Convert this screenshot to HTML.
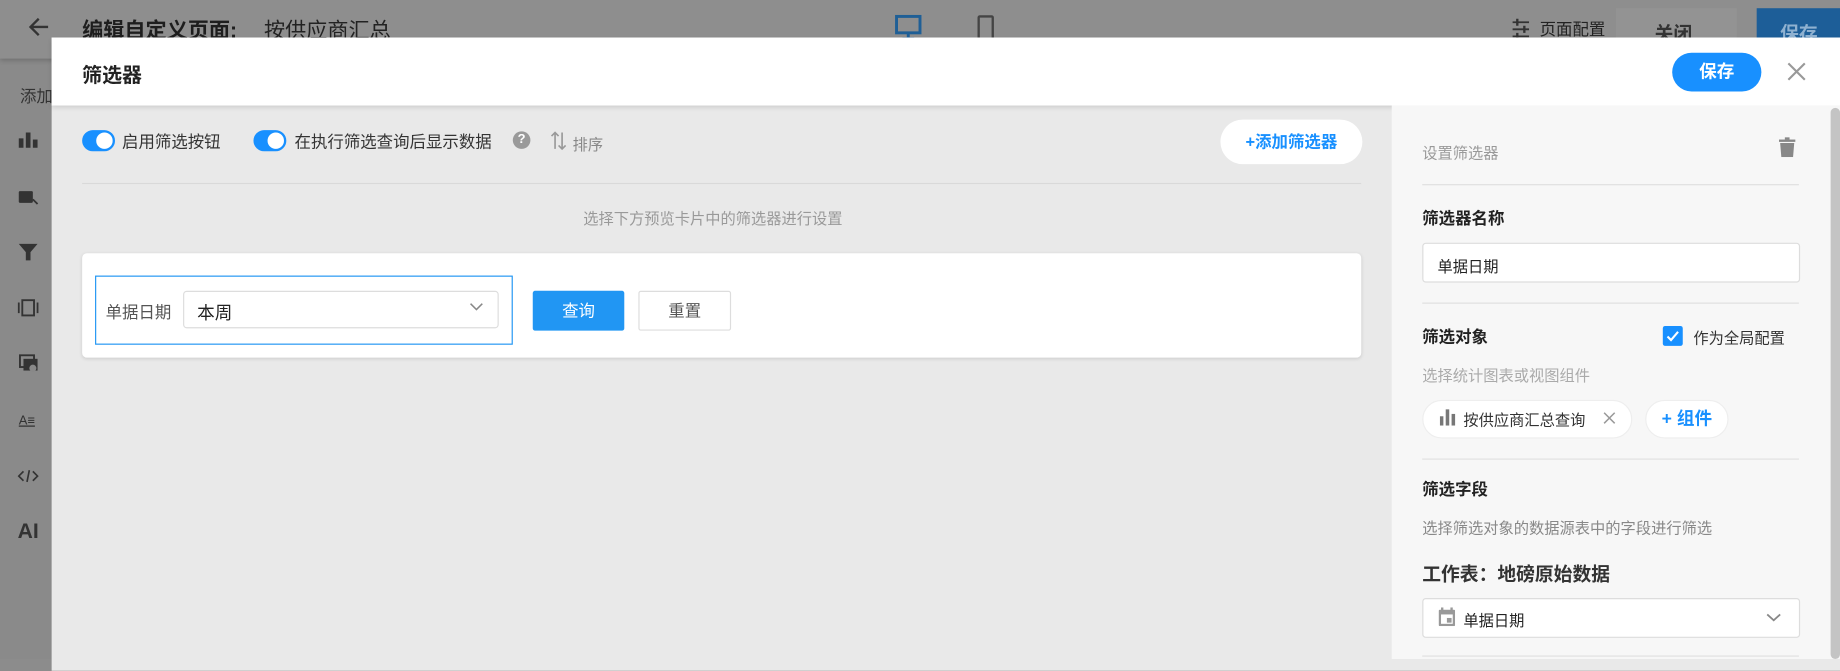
<!DOCTYPE html>
<html><head><meta charset="utf-8"><style>
*{box-sizing:border-box;margin:0;padding:0}
html,body{width:1840px;height:659px;overflow:hidden;background:#8c8c8c}
body{font-family:"Liberation Sans","Noto Sans CJK SC",sans-serif;color:#333}
#w{position:absolute;left:0;top:0;width:1568px;height:562px;transform:scale(1.17347,1.1726);transform-origin:0 0;background:#8a8a8a}
.a{position:absolute}
.t{white-space:nowrap;position:absolute}
.tog{position:absolute;width:28px;height:18px;border-radius:9px;background:#1890ff}
.tog:after{content:"";position:absolute;right:2px;top:2px;width:14px;height:14px;border-radius:50%;background:#fff}
.b{font-weight:bold}
.hr{position:absolute;height:1px;background:#e0e0e0}
</style></head><body><div id="w">
<div class="a" style="left:0;top:0;width:1568px;height:50px;background:#8e8e8e;box-shadow:0 2px 4px rgba(0,0,0,.2)"></div>
<svg class="a" style="left:22px;top:12px" width="22" height="22" viewBox="0 0 22 22"><path d="M19 11H4M11 4l-7 7 7 7" stroke="#333" stroke-width="2" fill="none"/></svg>
<div class="t b" style="left:70px;top:12px;font-size:18px;color:#1e1e1e">编辑自定义页面:</div>
<div class="t" style="left:225px;top:12px;font-size:18px;color:#222">按供应商汇总</div>
<svg class="a" style="left:762px;top:12px" width="24" height="22"><rect x="2" y="2" width="20" height="14" fill="none" stroke="#1f5f96" stroke-width="2.5"/><path d="M12 16v4M7 21h10" stroke="#1f5f96" stroke-width="2.5"/></svg>
<svg class="a" style="left:832px;top:12px" width="16" height="24"><rect x="2" y="2" width="12" height="20" rx="1" fill="none" stroke="#444" stroke-width="2"/></svg>
<svg class="a" style="left:1288px;top:15px" width="16" height="20"><path d="M1 4h14M1 10h14M1 16h14" stroke="#333" stroke-width="1.5"/><path d="M5 1v6M11 7v6M5 13v6" stroke="#333" stroke-width="2"/></svg>
<div class="t" style="left:1312px;top:15px;font-size:14px;color:#222">页面配置</div>
<div class="a" style="left:1377px;top:7px;width:103px;height:40px;background:#939393"></div>
<div class="t b" style="left:1410px;top:15px;font-size:16px;color:#333">关闭</div>
<div class="a" style="left:1497px;top:7px;width:80px;height:40px;background:#1d5e98"></div>
<div class="t b" style="left:1517px;top:15px;font-size:16px;color:#8fb1d0">保存</div>
<div class="t" style="left:17px;top:72px;font-size:14px;color:#333">添加</div>
<svg class="a" style="left:14px;top:110px" width="20" height="360" fill="#333">
<rect x="2" y="8" width="4" height="8"/><rect x="8" y="3" width="4" height="13"/><rect x="14" y="9" width="4" height="7"/>
<rect x="2" y="53" width="12" height="10" rx="1"/><path d="M14 60l4 4" stroke="#333" stroke-width="1.5"/>
<path d="M2 98h16l-6 7v7h-4v-7z"/>
<rect x="5" y="146" width="10" height="13" fill="none" stroke="#333" stroke-width="1.6"/><path d="M2 148v9M18 148v9" stroke="#333" stroke-width="1.5"/>
<rect x="3" y="193" width="12" height="10" fill="none" stroke="#333" stroke-width="1.6"/><rect x="6" y="196" width="12" height="10"/><circle cx="14" cy="204" r="3" fill="#888"/>
<text x="2" y="252" font-size="11" font-family="Liberation Sans" text-decoration="underline">A≡</text>
<path d="M6 292l-4 4 4 4M14 292l4 4-4 4M11 291l-2 10" stroke="#333" stroke-width="1.4" fill="none"/>
<text x="1" y="349" font-size="18" font-weight="bold" font-family="Liberation Sans">AI</text></svg>
<!-- modal -->
<div class="a" style="left:44px;top:32px;width:1530px;height:540px;background:#e9e9e9"></div>
<div class="a" style="left:44px;top:32px;width:1530px;height:58px;background:#fff;box-shadow:0 2px 4px rgba(0,0,0,.12)"></div>
<div class="t b" style="left:70px;top:50px;font-size:17px;color:#222">筛选器</div>
<div class="a" style="left:1425px;top:45px;width:76px;height:33px;border-radius:17px;background:#1890ff;color:#fff;font-size:15px;font-weight:bold;text-align:center;line-height:33px">保存</div>
<svg class="a" style="left:1523px;top:53px" width="16" height="16"><path d="M1 1l14 14M15 1L1 15" stroke="#999" stroke-width="1.8"/></svg>
<div class="a" style="left:1186px;top:90px;width:382px;height:472px;background:#f7f7f7"></div>
<div class="a" style="left:1560px;top:92px;width:8px;height:470px;background:#c4c4c4;border-radius:4px"></div>
<div class="tog" style="left:70px;top:111px"></div>
<div class="t" style="left:104px;top:111px;font-size:14px">启用筛选按钮</div>
<div class="tog" style="left:216px;top:111px"></div>
<div class="t" style="left:251px;top:111px;font-size:14px">在执行筛选查询后显示数据</div>
<div class="a" style="left:437px;top:112px;width:15px;height:15px;border-radius:50%;background:#9a9a9a;color:#fff;font-size:11px;text-align:center;line-height:15px;font-weight:bold">?</div>
<svg class="a" style="left:468px;top:111px" width="16" height="18"><path d="M5 16V2M2 5l3-3 3 3M11 2v14M8 13l3 3 3-3" stroke="#999" stroke-width="1.4" fill="none"/></svg>
<div class="t" style="left:488px;top:113px;font-size:13px;color:#888">排序</div>
<div class="a" style="left:1040px;top:102px;width:121px;height:38px;border-radius:19px;background:#fff;color:#1890ff;font-size:14px;font-weight:bold;text-align:center;line-height:38px">+添加筛选器</div>
<div class="hr" style="left:70px;top:156px;width:1090px;background:#d9d9d9"></div>
<div class="t" style="left:497px;top:176px;font-size:13px;color:#999">选择下方预览卡片中的筛选器进行设置</div>
<div class="a" style="left:70px;top:216px;width:1090px;height:89px;background:#fff;border-radius:4px;box-shadow:0 1px 3px rgba(0,0,0,.12)"></div>
<div class="a" style="left:81px;top:235px;width:356px;height:59px;border:1px solid #2196f3"></div>
<div class="t" style="left:90px;top:256px;font-size:14px;color:#555">单据日期</div>
<div class="a" style="left:156px;top:248px;width:269px;height:32px;border:1px solid #ddd;border-radius:3px;background:#fff"></div>
<div class="t" style="left:168px;top:256px;font-size:15px;color:#222">本周</div>
<svg class="a" style="left:400px;top:258px" width="12" height="8"><path d="M1 1l5 5 5-5" stroke="#888" stroke-width="1.3" fill="none"/></svg>
<div class="a" style="left:454px;top:248px;width:78px;height:34px;background:#2196f3;border-radius:2px;color:#fff;font-size:14px;text-align:center;line-height:34px">查询</div>
<div class="a" style="left:544px;top:248px;width:79px;height:34px;border:1px solid #ddd;border-radius:2px;background:#fff;color:#555;font-size:14px;text-align:center;line-height:32px">重置</div>
<!-- right -->
<div class="t" style="left:1212px;top:120px;font-size:13px;color:#999">设置筛选器</div>
<svg class="a" style="left:1516px;top:117px" width="14" height="17" fill="#888"><rect x="0" y="2" width="14" height="2"/><rect x="5" y="0" width="4" height="2"/><path d="M1 5h12l-1 12H2z"/></svg>
<div class="hr" style="left:1212px;top:157px;width:321px"></div>
<div class="t b" style="left:1212px;top:176px;font-size:14px;color:#222">筛选器名称</div>
<div class="a" style="left:1212px;top:207px;width:322px;height:34px;background:#fff;border:1px solid #ddd;border-radius:3px"></div>
<div class="t" style="left:1225px;top:217px;font-size:13px;color:#222">单据日期</div>
<div class="hr" style="left:1212px;top:258px;width:321px"></div>
<div class="t b" style="left:1212px;top:277px;font-size:14px;color:#222">筛选对象</div>
<div class="a" style="left:1417px;top:278px;width:17px;height:17px;background:#1890ff;border-radius:2px"></div>
<svg class="a" style="left:1419px;top:280px" width="13" height="13"><path d="M2 7l3 3 6-7" stroke="#fff" stroke-width="1.8" fill="none"/></svg>
<div class="t" style="left:1443px;top:278px;font-size:13px;color:#333">作为全局配置</div>
<div class="t" style="left:1212px;top:310px;font-size:13px;color:#aaa">选择统计图表或视图组件</div>
<div class="a" style="left:1212px;top:341px;width:179px;height:33px;border-radius:17px;background:#fff;border:1px solid #eee"></div>
<svg class="a" style="left:1227px;top:349px" width="14" height="14" fill="#777"><rect x="0" y="6" width="3" height="8"/><rect x="5" y="0" width="3" height="14"/><rect x="10" y="4" width="3" height="10"/></svg>
<div class="t" style="left:1247px;top:348px;font-size:13px;color:#333">按供应商汇总查询</div>
<svg class="a" style="left:1366px;top:351px" width="11" height="11"><path d="M1 1l9 9M10 1l-9 9" stroke="#999" stroke-width="1.3"/></svg>
<div class="a" style="left:1402px;top:341px;width:71px;height:33px;border-radius:17px;background:#fff;border:1px solid #eee;color:#1890ff;font-size:15px;font-weight:bold;text-align:center;line-height:31px">+ 组件</div>
<div class="hr" style="left:1212px;top:391px;width:321px"></div>
<div class="t b" style="left:1212px;top:407px;font-size:14px;color:#222">筛选字段</div>
<div class="t" style="left:1212px;top:440px;font-size:13px;color:#888">选择筛选对象的数据源表中的字段进行筛选</div>
<div class="t b" style="left:1212px;top:476px;font-size:16px;color:#333">工作表：地磅原始数据</div>
<div class="a" style="left:1212px;top:510px;width:322px;height:34px;background:#fff;border:1px solid #ddd;border-radius:3px"></div>
<svg class="a" style="left:1226px;top:518px" width="14" height="16" fill="#999"><rect x="0" y="2" width="14" height="14" rx="1"/><rect x="2" y="6" width="10" height="8" fill="#fff"/><rect x="7" y="9" width="4" height="4"/><rect x="2" y="0" width="2" height="3"/><rect x="10" y="0" width="2" height="3"/></svg>
<div class="t" style="left:1247px;top:519px;font-size:13px;color:#222">单据日期</div>
<svg class="a" style="left:1505px;top:523px" width="13" height="8"><path d="M1 1l5.5 5 5.5-5" stroke="#888" stroke-width="1.5" fill="none"/></svg>
<div class="hr" style="left:1212px;top:559px;width:321px"></div>
</div></body></html>
